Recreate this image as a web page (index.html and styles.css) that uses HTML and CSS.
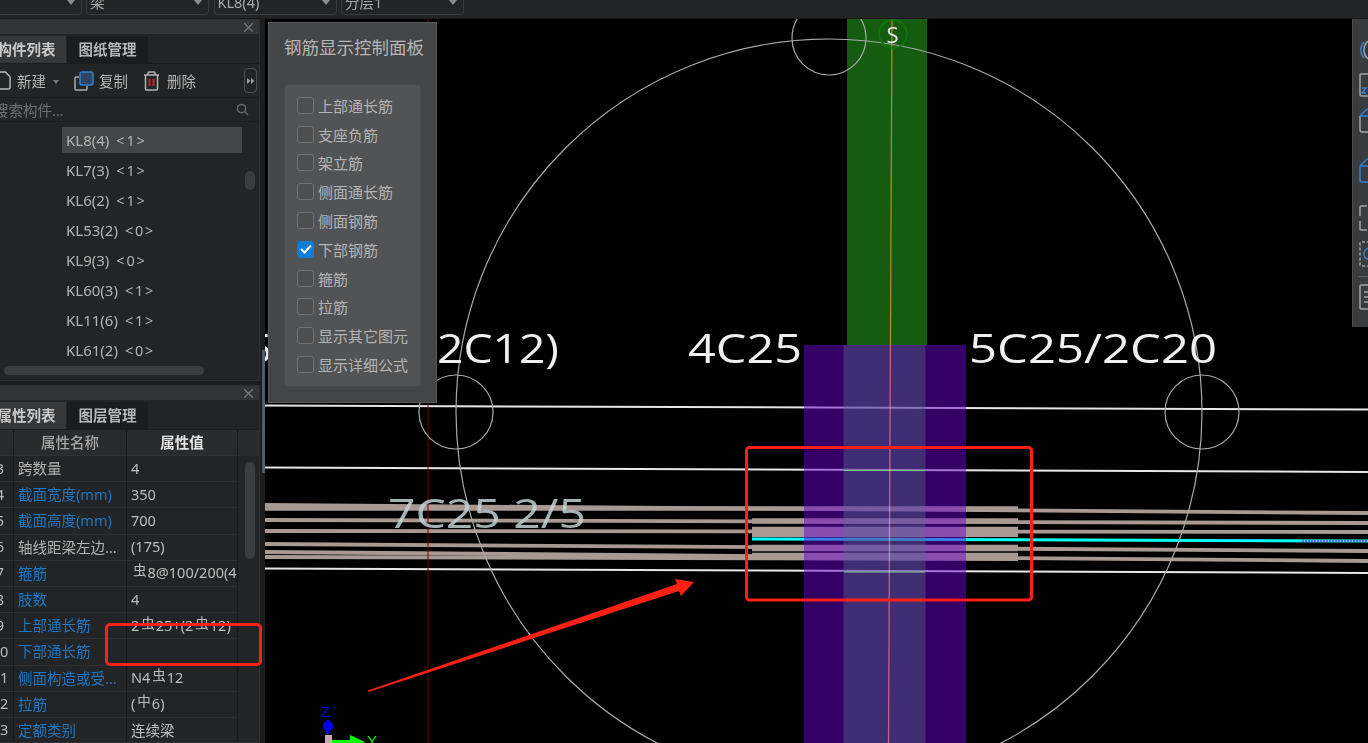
FILE: index.html
```html
<!DOCTYPE html>
<html lang="zh">
<head>
<meta charset="utf-8">
<title>钢筋显示控制面板</title>
<link rel="stylesheet" href="styles.css">
</head>
<body>
<header class="topbar">
  <div class="drop drop-first"><span class="caret"></span></div>
  <div class="drop"><span>梁</span><span class="caret"></span></div>
  <div class="drop"><span>KL8(4)</span><span class="caret"></span></div>
  <div class="drop"><span>分层1</span><span class="caret"></span></div>
</header>
<div class="workspace">
  <aside class="sidebar">
    <section class="panel panel-list">
      <div class="panel-head"><svg class="close" viewBox="0 0 10 10"><path d="M0 0L10 10M10 0L0 10"/></svg></div>
      <div class="tabs"><div class="tab active">构件列表</div><div class="tab">图纸管理</div></div>
      <div class="tools">
        <svg class="ic-new" viewBox="0 0 16 20"><path d="M1 1H10L15 6V17Q15 19 13 19H3Q1 19 1 17Z"/></svg>
        <span class="tool-label">新建</span>
        <span class="mini-caret"></span>
        <svg class="ic-copy" viewBox="0 0 20 20"><path class="copy-back" d="M5 6H2Q1 6 1 7V18Q1 19 2 19H12Q13 19 13 18V15"/><rect class="copy-front" x="6" y="1" width="13" height="13" rx="2"/></svg>
        <span class="tool-label">复制</span>
        <svg class="ic-trash" viewBox="0 0 17 20"><path class="trash-body" d="M1 4H16M5 4V2Q5 1 6 1H11Q12 1 12 2V4M2.500 4V18Q2.500 19 3.500 19H13.500Q14.500 19 14.500 18V4"/><path class="trash-red" d="M6.500 8V15M10.500 8V15"/></svg>
        <span class="tool-label">删除</span>
        <span class="more"><svg viewBox="0 0 8 6"><path d="M0 0L3.500 3L0 6ZM4 0L7.500 3L4 6Z"/></svg></span>
      </div>
      <div class="search">
        <span>搜索构件...</span>
        <svg viewBox="0 0 14 14"><circle cx="6" cy="6" r="4.500"/><path d="M9.500 9.500L13 13"/></svg>
      </div>
      <div class="list">
        <div class="row selected"><span>KL8(4)</span><span class="count">&lt;1&gt;</span></div>
        <div class="row"><span>KL7(3)</span><span class="count">&lt;1&gt;</span></div>
        <div class="row"><span>KL6(2)</span><span class="count">&lt;1&gt;</span></div>
        <div class="row"><span>KL53(2)</span><span class="count">&lt;0&gt;</span></div>
        <div class="row"><span>KL9(3)</span><span class="count">&lt;0&gt;</span></div>
        <div class="row"><span>KL60(3)</span><span class="count">&lt;1&gt;</span></div>
        <div class="row"><span>KL11(6)</span><span class="count">&lt;1&gt;</span></div>
        <div class="row"><span>KL61(2)</span><span class="count">&lt;0&gt;</span></div>
        <div class="vthumb"></div>
        <div class="hthumb"></div>
      </div>
    </section>
    <section class="panel panel-props">
      <div class="panel-head"><svg class="close" viewBox="0 0 10 10"><path d="M0 0L10 10M10 0L0 10"/></svg></div>
      <div class="tabs"><div class="tab active">属性列表</div><div class="tab">图层管理</div></div>
      <div class="grid">
        <div class="gr gh"><div class="c0"></div><div class="c1">属性名称</div><div class="c2">属性值</div></div>
        <div class="gr"><div class="c0">3</div><div class="c1">跨数量</div><div class="c2">4</div></div>
        <div class="gr"><div class="c0">4</div><div class="c1 link">截面宽度(mm)</div><div class="c2">350</div></div>
        <div class="gr"><div class="c0">5</div><div class="c1 link">截面高度(mm)</div><div class="c2">700</div></div>
        <div class="gr"><div class="c0">6</div><div class="c1">轴线距梁左边...</div><div class="c2">(175)</div></div>
        <div class="gr"><div class="c0">7</div><div class="c1 link">箍筋</div><div class="c2"><span class="rb">虫</span>8@100/200(4)</div></div>
        <div class="gr"><div class="c0">8</div><div class="c1 link">肢数</div><div class="c2">4</div></div>
        <div class="gr"><div class="c0">9</div><div class="c1 link">上部通长筋</div><div class="c2">2<span class="rb">虫</span>25+(2<span class="rb">虫</span>12)</div></div>
        <div class="gr"><div class="c0">10</div><div class="c1 link">下部通长筋</div><div class="c2"></div></div>
        <div class="gr"><div class="c0">11</div><div class="c1 link">侧面构造或受...</div><div class="c2">N4<span class="rb">虫</span>12</div></div>
        <div class="gr"><div class="c0">12</div><div class="c1 link">拉筋</div><div class="c2">(<span class="rb">中</span>6)</div></div>
        <div class="gr"><div class="c0">13</div><div class="c1 link">定额类别</div><div class="c2">连续梁</div></div>
        <div class="vthumb props-thumb"></div>
      </div>
    </section>
    <div class="splitter"></div>
    <div class="mark"></div>
  </aside>
  <main class="canvas">
    <svg class="scene" viewBox="265 19 1103 724" width="1103" height="724">
      <rect class="band-green" x="847" y="19" width="80" height="326"/>
      <g class="white-lines">
        <path d="M265 405.500L1368 409.500"/>
        <path d="M265 467.500L1368 472"/>
        <path d="M265 568.500L1368 573"/>
      </g>
      <g class="bars">
        <path d="M265 505L1368 513"/>
        <path class="b4" d="M265 508.500L1018 508.500"/>
        <path d="M265 520L1368 523"/>
        <path d="M265 531L1368 532"/>
        <path d="M265 544L1368 551"/>
        <path d="M265 552L1368 561"/>
        <path d="M265 557L1018 559"/>
        <path class="b5" d="M752 521H1018"/>
        <path class="b4" d="M752 529H1018"/>
        <path d="M752 535H1018"/>
        <path class="b6" d="M752 548H1018"/>
        <path class="b4" d="M752 555H1018"/>
      </g>
      <path class="cyan" d="M752 539L1368 541"/>
      <path class="cyan-dash" d="M1302 541H1368"/>
      <rect class="band-purple" x="804" y="345" width="162" height="398"/>
      <rect class="band-inner" x="843.500" y="345" width="82" height="398"/>
      <path class="green-thin" d="M844 470.500H925M844 572H925"/>
      <path class="red-dark" d="M428 19V743"/>
      <path class="red-mid" d="M892 19L888.500 743"/>
      <g class="circles">
        <circle cx="829" cy="412" r="373"/>
        <circle cx="829" cy="38" r="37"/>
        <circle cx="456" cy="412" r="37"/>
        <circle cx="1202" cy="412" r="37"/>
      </g>
      <circle class="s-ring" cx="893" cy="34" r="14"/>
      <text class="s-label" x="892.500" y="43">S</text>
      <text class="dim" x="248" y="363" textLength="24" lengthAdjust="spacingAndGlyphs">5</text>
      <text class="dim" x="437" y="363" textLength="122" lengthAdjust="spacingAndGlyphs">2C12)</text>
      <text class="dim" x="688" y="363" textLength="114" lengthAdjust="spacingAndGlyphs">4C25</text>
      <text class="dim" x="969" y="363" textLength="248" lengthAdjust="spacingAndGlyphs">5C25/2C20</text>
      <text class="dim dim-faint" x="388" y="528" textLength="198" lengthAdjust="spacingAndGlyphs">7C25 2/5</text>
      <path class="arrow" d="M368 690.500L677 584L675 579L694 582L681 596L679 591L368.500 692Z"/>
      <rect class="red-box" x="746.500" y="447.500" width="285" height="152.500" rx="3"/>
      <text class="axis-z" x="321" y="717">Z</text>
      <path class="axis-z-shaft" d="M328 720V734"/>
      <circle class="axis-z-dot" cx="328" cy="726" r="5"/>
      <rect class="axis-box" x="325" y="735" width="7" height="8"/>
      <path class="axis-y-arrow" d="M332 740H350V735L365 742L350 749V744H332Z"/>
      <text class="axis-y" x="367" y="746">Y</text>
    </svg>
    <section class="float-panel">
      <h2 class="float-title">钢筋显示控制面板</h2>
      <div class="checks">
        <label class="check"><span class="box"></span>上部通长筋</label>
        <label class="check"><span class="box"></span>支座负筋</label>
        <label class="check"><span class="box"></span>架立筋</label>
        <label class="check"><span class="box"></span>侧面通长筋</label>
        <label class="check"><span class="box"></span>侧面钢筋</label>
        <label class="check"><span class="box on"><svg viewBox="0 0 12 10"><path d="M1 5L4.500 8.500L11 1.500"/></svg></span>下部钢筋</label>
        <label class="check"><span class="box"></span>箍筋</label>
        <label class="check"><span class="box"></span>拉筋</label>
        <label class="check"><span class="box"></span>显示其它图元</label>
        <label class="check"><span class="box"></span>显示详细公式</label>
      </div>
    </section>
    <nav class="rtools">
      <svg class="rt rt1" viewBox="0 0 16 24"><path class="gl" d="M14 1A10 11 0 0 0 16 23"/><path class="bl" d="M5 4A10 11 0 0 0 5 20"/></svg>
      <svg class="rt rt2" viewBox="0 0 16 24"><path class="gl" d="M16 1H2Q1 1 1 2V22Q1 23 2 23H16"/><path class="bl" d="M3 15H7L3 20H7"/></svg>
      <svg class="rt rt3" viewBox="0 0 16 26"><path class="gl" d="M1 9V23Q1 25 3 25H16"/><path class="bl" d="M1 9L8 2H16M1 9H16"/></svg>
      <svg class="rt rt4" viewBox="0 0 16 26"><path class="bl" d="M1 9V23Q1 25 3 25H16M1 9L8 2H16M1 9H16"/></svg>
      <svg class="rt rt5" viewBox="0 0 16 26"><path class="gl" d="M8 1H2Q1 1 1 2V11M1 16V24Q1 25 2 25H8"/></svg>
      <svg class="rt rt6" viewBox="0 0 16 26"><path class="gl dashed" d="M16 1H2Q1 1 1 2V24Q1 25 2 25H16"/><path class="bl" d="M10 7Q5 8 5 13Q5 18 10 18Q13 18 13 15"/></svg>
      <div class="rt-sep"></div>
      <svg class="rt rt7" viewBox="0 0 16 26"><path class="gl" d="M16 1H2Q1 1 1 2V24Q1 25 2 25H16M5 8H16M5 13H16M5 18H16"/></svg>
    </nav>
  </main>
</div>
</body>
</html>
```

FILE: styles.css
```css
* { box-sizing: border-box; }
html, body { margin: 0; height: 743px; overflow: hidden; }
body {
  background: #1c1d1e;
  color: #b9b9b9;
  font-family: "Noto Sans", "Noto Sans CJK SC", sans-serif;
  font-size: 14.500px;
}

/* top selector bar */
.topbar { display: flex; gap: 4.500px; height: 19px; background: #232425; border-bottom: 1px solid #1a1a1b; }
.drop {
  display: flex; justify-content: space-between; align-items: center;
  flex: none; width: 123px; height: 27px; margin-top: -12px; padding: 0 6px 0 3px;
  border: 1px solid #3a3b3c; border-radius: 4px;
  font-size: 14.500px; line-height: 20px; color: #a9a9a9;
}
.drop-first { width: 81.500px; justify-content: flex-end; border-left: 0; border-radius: 0 4px 4px 0; }
.caret { width: 0; height: 0; margin-top: 2px; border: 4px solid transparent; border-top: 5px solid #8c8c8c; border-bottom: 0; }

/* left column */
.workspace { display: flex; height: 724px; }
.sidebar { position: relative; display: flex; flex-direction: column; gap: 4px; flex: 0 0 265px; overflow: hidden; padding-right: 5px; }
.panel { position: relative; margin-left: -13px; background: #232425; border: 1px solid #2e2f30; border-left: 0; }
.panel-list { flex: none; height: 362px; }
.panel-props { flex: 1; min-height: 0; overflow: hidden; }
.panel-head { display: flex; justify-content: flex-end; align-items: center; height: 14px; padding-right: 6px; background: #333435; }
.close { width: 9px; height: 9px; fill: none; stroke: #777; stroke-width: 1.400; }
.tabs { display: flex; height: 30px; padding-top: 2px; gap: 1px; border-bottom: 1px solid #1b1c1d; }
.tab { display: flex; align-items: center; justify-content: center; width: 81px; padding-bottom: 2px; background: #1b1c1d; color: #b4b8bb; font-weight: 700; font-size: 14.500px; }
.tab.active { width: 79px; background: #37383a; color: #c9c9c9; }

/* toolbar */
.tools { display: flex; align-items: center; height: 34px; padding-left: 9px; border-bottom: 1px solid #1b1c1d; }
.tool-label { font-size: 14.500px; color: #b5b5b5; }
.ic-new { width: 15px; height: 19px; margin-right: 6px; fill: none; stroke: #bbb; stroke-width: 1.500; }
.mini-caret { width: 0; height: 0; margin: 2px 15px 0 7px; border: 3px solid transparent; border-top: 4px solid #777; border-bottom: 0; }
.ic-copy { width: 20px; height: 20px; margin-right: 5px; fill: none; stroke-width: 1.500; }
.copy-back { stroke: #a9a9a9; }
.copy-front { stroke: #2b82d8; fill: #2c4560; }
.ic-trash { width: 17px; height: 20px; margin: 0 7px 0 15px; fill: none; stroke-width: 1.500; }
.trash-body { stroke: #b5b5b5; }
.trash-red { stroke: #c02a2a; stroke-width: 2; }
.more { display: flex; align-items: center; justify-content: center; width: 13px; height: 25px; margin-left: 48px; border: 1.500px solid #4e4f50; border-radius: 4px; }
.more svg { width: 8px; height: 6px; fill: #9a9a9a; }

/* search */
.search { display: flex; align-items: center; justify-content: space-between; height: 24px; padding: 0 10px 0 7px; border-bottom: 1px solid #1b1c1d; color: #6f7071; font-size: 14.500px; }
.search svg { width: 13px; height: 13px; fill: none; stroke: #666; stroke-width: 1.600; }

/* beam list */
.list { display: flex; flex-direction: column; gap: 4px; padding: 5px 0 0 75px; }
.row { display: flex; align-items: center; gap: 7px; width: 180px; height: 26px; padding-left: 4px; font-size: 15px; color: #b3b3b3; }
.row.selected { background: #444546; }
.count { font-size: 14.500px; letter-spacing: 1.800px; }
.vthumb { position: absolute; left: 258px; top: 151px; width: 10px; height: 19px; border-radius: 5px; background: #3b3c3d; }
.hthumb { position: absolute; left: 17px; top: 346px; width: 200px; height: 9px; border-radius: 5px; background: #3b3c3d; }

/* property grid */
.grid { position: relative; }
.gr { display: grid; grid-template-columns: 27px 113px 111px; height: 26.200px; align-items: stretch; }
.gr > div { display: flex; align-items: center; overflow: hidden; white-space: nowrap; padding-bottom: 2px; border-right: 1px solid #17181a; border-bottom: 1px solid #2f3031; }
.c0 { justify-content: center; color: #bbb; background: #222324; }
.gr > .c1 { padding-left: 4px; color: #b3b3b3; }
.gr > .c2 { padding-left: 4px; color: #bdbdbd; }
.gr > .link { color: #1d78c6; }
.gh { height: 26px; background: #2a2b2c; }
.gh > .c0 { background: #2a2b2c; }
.gh > .c1.c1 { justify-content: center; padding: 0 0 3px; font-weight: 500; color: #a6a6a6; }
.gh > .c2.c2 { justify-content: center; padding: 0 0 3px; font-weight: 700; color: #e4e4e4; }
.rb { font-size: 13.500px; position: relative; top: -3px; margin: 0 1px 0 2px; }
.props-thumb { top: 32px; height: 97px; }
.mark { position: absolute; left: 105px; top: 604px; width: 157px; height: 43px; border: 3px solid #ff2015; border-radius: 5px; z-index: 2; }
.splitter { position: absolute; right: 0; top: 331px; width: 3px; height: 123px; background: #4e5e6b; }

/* drawing */
.canvas { position: relative; flex: 1; background: #000; overflow: hidden; }
.scene { display: block; }
.band-green { fill: #155c10; }
.band-purple { fill: #6a00cc; fill-opacity: .5; }
.band-inner { fill: #55758c; fill-opacity: .38; }
.white-lines path { fill: none; stroke: #e6e6e6; stroke-width: 2; }
.bars path { fill: none; stroke: #a89a92; stroke-width: 3.800; }
.bars .b4 { stroke-width: 4.500; }
.bars .b5 { stroke-width: 5.500; }
.bars .b6 { stroke-width: 6.500; }
.cyan { fill: none; stroke: #00ffff; stroke-width: 3; }
.cyan-dash { fill: none; stroke: #7c5cff; stroke-width: 2; stroke-dasharray: 2 1; }
.green-thin { fill: none; stroke: #84c48a; stroke-width: 1; }
.red-dark { fill: none; stroke: #740000; stroke-width: 1; }
.red-mid { fill: none; stroke: #c04018; stroke-width: 1.200; mix-blend-mode: screen; }
.circles circle { fill: none; stroke: #a8a8a8; stroke-width: 1.200; }
.s-ring { fill: none; stroke: #0a7a0a; stroke-width: 1.500; }
.s-label { font-family: "Open Sans", sans-serif; font-size: 22px; fill: #e8e8e8; text-anchor: middle; }
.dim { font-family: "Open Sans", sans-serif; font-size: 41px; fill: #f0f0f0; }
.dim-faint { fill: #c2d1d5; fill-opacity: .85; }
.arrow { fill: #ff2015; }
.red-box { fill: none; stroke: #ff2015; stroke-width: 3; }
.axis-z { font-family: "Liberation Sans", sans-serif; font-size: 14px; fill: #0000ff; }
.axis-z-shaft { stroke: #0000ff; stroke-width: 3; }
.axis-z-dot { fill: #0000ff; }
.axis-box { fill: #c9a8b4; }
.axis-y-arrow { fill: #00ff00; }
.axis-y { font-family: "Liberation Sans", sans-serif; font-size: 15px; fill: #00ff00; }

/* floating control panel */
.float-panel { position: absolute; left: 3px; top: 3px; width: 169px; height: 381px; padding: 11px 15px 0; background: #444546; border: 1px solid #58595a; }
.float-title { margin: 0 0 24px; font-size: 17.500px; line-height: 26px; font-weight: 400; text-align: center; white-space: nowrap; color: #b6b6b6; }
.checks { display: flex; flex-direction: column; height: 303px; padding: 6px 0 0 12px; background: #525354; border: 1px solid #48494a; border-radius: 3px; }
.check { display: flex; align-items: center; flex: none; gap: 4px; height: 28.800px; font-size: 15px; color: #b4b4b4; white-space: nowrap; }
.box { display: flex; align-items: center; justify-content: center; width: 17px; height: 17px; border: 1.500px solid #717172; border-radius: 3px; background: #4d4e4f; }
.box.on { background: #0f7cd6; border-color: #0f7cd6; }
.box svg { width: 12px; height: 10px; fill: none; stroke: #fff; stroke-width: 2; }

/* right icon strip */
.rtools { position: absolute; right: 0; top: 0; display: flex; flex-direction: column; align-items: flex-start; width: 16px; height: 308px; padding: 18px 0 0 6px; background: #3a3b3c; border-left: 1px solid #4c4d4e; }
.rt { flex: none; width: 16px; height: 26px; fill: none; stroke-width: 1.500; }
.rt .gl { stroke: #a3a3a3; }
.rt .bl { stroke: #2b82d8; }
.rt .dashed { stroke-dasharray: 3 2; }
.rt2 { margin-top: 9px; }
.rt3 { margin-top: 9px; }
.rt4 { margin-top: 24px; }
.rt5 { margin-top: 22px; }
.rt6 { margin-top: 10px; }
.rt-sep { width: 12px; height: 1px; margin: 9px 0 7px; background: #666; }
```
